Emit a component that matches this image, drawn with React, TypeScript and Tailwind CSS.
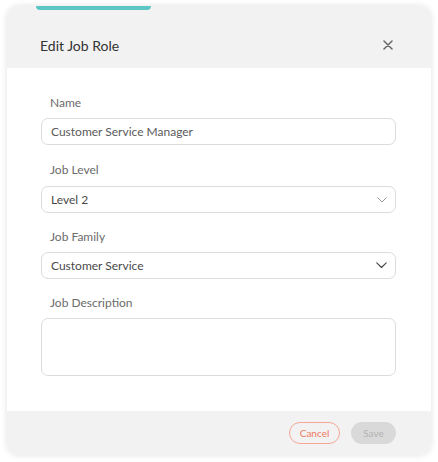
import React from "react";

function Chevron({ color, w }: { color: string; w: number }) {
  return (
    <svg width={w} height={w * 0.6} viewBox="0 0 10 6" fill="none">
      <path d="M0.7 0.7 L5 5 L9.3 0.7" stroke={color} strokeWidth="1" strokeLinecap="round" strokeLinejoin="round" />
    </svg>
  );
}

function Label({ children }: { children: React.ReactNode }) {
  return <div className="pl-[9px] h-4 leading-4 text-[12px] text-[#6b6b6b]">{children}</div>;
}

export default function App() {
  return (
    <div className="w-[438px] h-[462px] bg-white pt-[6px] pl-[7px]" style={{ fontFamily: "Lato, 'Open Sans', sans-serif" }}>
      <div className="relative w-[424px] h-[449px] rounded-[12px] bg-white overflow-hidden shadow-[0_0_6px_rgba(0,0,0,0.12)] flex flex-col">
        <div className="absolute left-[29px] top-0 w-[115px] h-[4px] rounded-b-full bg-[#5cc6c4]" />
        <div className="h-[62px] bg-[#f2f2f2] flex items-center justify-between pl-[33px] pr-[38px] pt-[16px]">
          <span className="text-[14px] text-[#333]">Edit Job Role</span>
          <svg width="10" height="10" viewBox="0 0 10 10">
            <path d="M1 1 L9 9 M9 1 L1 9" stroke="#666" strokeWidth="1.5" strokeLinecap="round" />
          </svg>
        </div>
        <div className="flex-1 bg-white pl-[34px] pr-[35px] pt-[27px] flex flex-col">
          <Label>Name</Label>
          <div className="mt-[7px] h-[27px] rounded-[7px] border border-[#dcdcdc] flex items-center pl-[9px] text-[12px] text-[#5a5a5a]">
            Customer Service Manager
          </div>
          <div className="mt-[17px]"><Label>Job Level</Label></div>
          <div className="mt-[8px] h-[27px] rounded-[7px] border border-[#dcdcdc] flex items-center justify-between pl-[9px] pr-[8px] text-[12px] text-[#4a4a4a]">
            <span>Level 2</span>
            <Chevron color="#9a9a9a" w={10} />
          </div>
          <div className="mt-[16px]"><Label>Job Family</Label></div>
          <div className="mt-[7px] h-[27px] rounded-[7px] border border-[#dcdcdc] flex items-center justify-between pl-[9px] pr-[8px] text-[12px] text-[#4a4a4a]">
            <span>Customer Service</span>
            <Chevron color="#444" w={11} />
          </div>
          <div className="mt-[16px]"><Label>Job Description</Label></div>
          <div className="mt-[7px] h-[58px] rounded-[7px] border border-[#dcdcdc]" />
        </div>
        <div className="h-[44px] bg-[#f2f2f2] flex items-center justify-end pr-[35px] gap-[11px]">
          <div className="h-[22px] w-[51px] rounded-full border border-[#f3a795] text-[#ee7a62] text-[10px] flex items-center justify-center">Cancel</div>
          <div className="h-[22px] w-[45px] rounded-full bg-[#d9d9d9] text-[#b3b3b3] text-[10px] flex items-center justify-center">Save</div>
        </div>
      </div>
    </div>
  );
}
